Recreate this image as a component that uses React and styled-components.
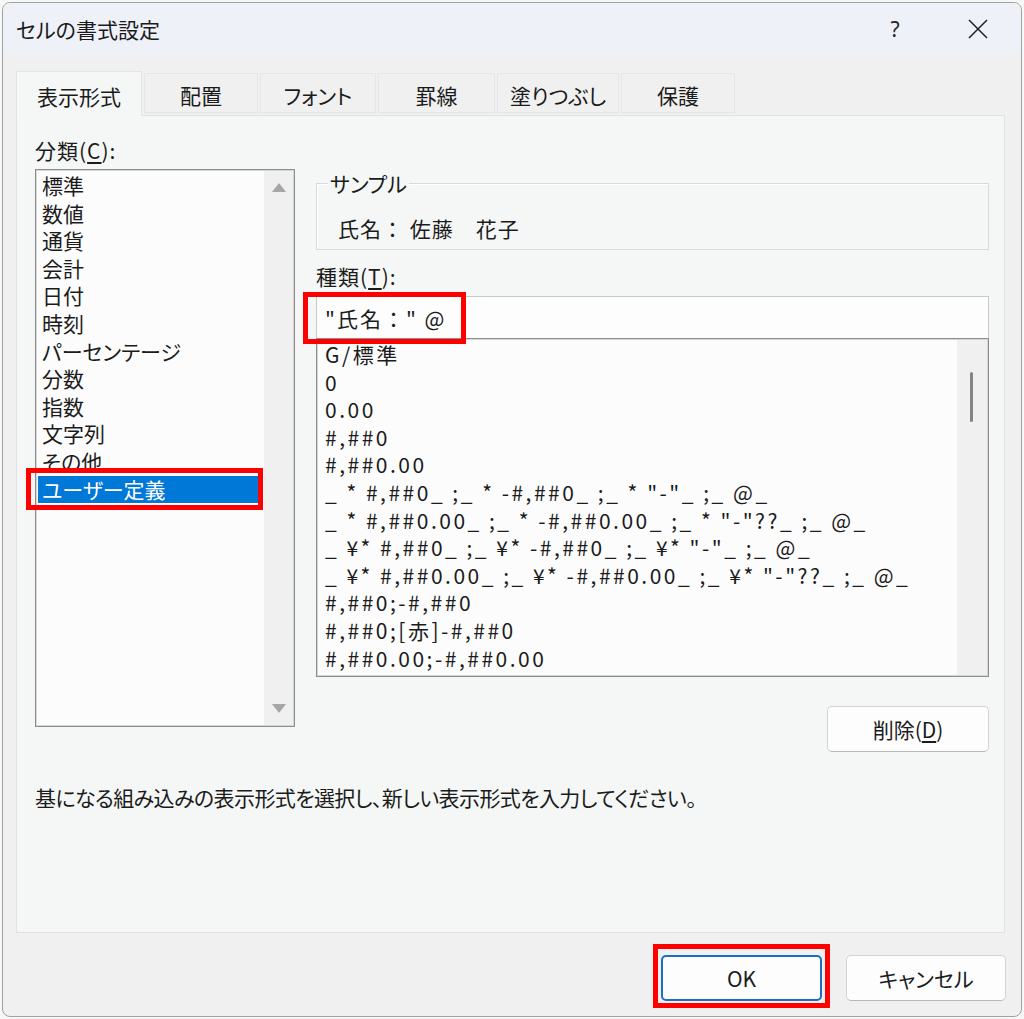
import React from 'react';
import styled, { createGlobalStyle } from 'styled-components';

const GlobalStyle = createGlobalStyle`
  html, body { margin: 0; padding: 0; }
  body {
    background: #f7f7f7;
    font-family: "Noto Sans CJK JP", "Noto Sans", sans-serif;
    font-size: 21px;
    color: #1b1b1b;
    font-feature-settings: "palt" 1;
  }
  *, *::before, *::after { box-sizing: border-box; }
`;

const Window = styled.div`
  margin: 2px 0 0 2px;
  width: 1020px;
  height: 1015px;
  border: 1px solid #a2a2a2;
  border-radius: 8px;
  background: #f0f0f0;
  overflow: hidden;
  display: flex;
  flex-direction: column;
`;

const TitleBar = styled.div`
  height: 51px;
  flex: none;
  background: #eef2f8;
  display: flex;
  align-items: center;
  padding: 0 13px;
`;

const Title = styled.div`
  line-height: 26px;
  font-size: 21px;
`;

const HelpButton = styled.div`
  margin-left: auto;
  width: 46px;
  text-align: center;
  font-family: "Noto Sans", sans-serif;
  font-size: 21px;
  color: #262626;
`;

const CloseButton = styled.div`
  width: 60px;
  margin-left: 30px;
  display: flex;
  justify-content: center;
  align-items: center;
`;

const Body = styled.div`
  flex: 1;
  display: flex;
  flex-direction: column;
  padding: 17px 16px 0 13px;
`;

const TabBar = styled.div`
  display: flex;
  align-items: flex-end;
  gap: 2px;
`;

const Tab = styled.div`
  width: ${p => p.$w}px;
  height: ${p => (p.$active ? 45 : 40)}px;
  margin-bottom: ${p => (p.$active ? -1 : 2)}px;
  background: ${p => (p.$active ? '#f4f7f5' : '#f0f0f0')};
  border: 1px solid ${p => (p.$active ? '#e4e4e4' : '#e6e6e6')};
  border-bottom: ${p => (p.$active ? 'none' : '1px solid #e6e6e6')};
  display: flex;
  align-items: center;
  justify-content: center;
  padding-top: 3px;
  position: relative;
  z-index: ${p => (p.$active ? 1 : 0)};
  font-size: 21px;
`;

const Panel = styled.div`
  flex: 1;
  background: #f4f7f5;
  border: 1px solid #e2e2e2;
  padding: 21px 15px 0 18px;
  display: flex;
  flex-direction: column;
`;

const Columns = styled.div`
  display: grid;
  grid-template-columns: 260px 1fr;
  column-gap: 21px;
  align-items: start;
`;

const Column = styled.div`
  display: flex;
  flex-direction: column;
`;

const FieldLabel = styled.div`
  margin-top: ${p => p.$mt || 0}px;
  line-height: 26px;
  letter-spacing: 1px;
`;

const Key = styled.span`
  text-decoration: underline;
  text-underline-offset: 3px;
`;

const ListBox = styled.div`
  margin-top: ${p => p.$mt || 0}px;
  height: ${p => p.$h}px;
  background: #fcfcfc;
  border: 1px solid #8d8d8d;
  box-shadow: inset 0 0 0 1px #d6d6d6;
  display: flex;
`;

const CategoryItems = styled.div`
  flex: 1;
  padding: 2px 6px 0 2px;
`;

const CategoryItem = styled.div`
  position: relative;
  height: 27.6px;
  line-height: 27.6px;
  padding-left: 4px;
  white-space: nowrap;
  background: ${p => (p.$selected ? '#0078d7' : 'transparent')};
  color: ${p => (p.$selected ? '#ffffff' : '#1b1b1b')};
`;

const ArrowBar = styled.div`
  width: 29px;
  margin: 1px 1px 1px 0;
  background: #f0f0f0;
  display: flex;
  flex-direction: column;
  justify-content: space-between;
  align-items: center;
  padding: 12px 0 12px 0;
`;

const ThumbBar = styled.div`
  width: 30px;
  margin: 1px 1px 1px 0;
  background: #f0f0f0;
  display: flex;
  flex-direction: column;
  align-items: center;
  padding-top: 32px;
`;

const Thumb = styled.div`
  width: 3px;
  height: 50px;
  border-radius: 2px;
  background: #848484;
  margin-left: -2px;
`;

const GroupBox = styled.div`
  position: relative;
  margin-top: 46px;
  height: 67px;
  border: 1px solid #dadada;
  box-shadow: inset 1px 1px 0 #ffffff;
  padding: 31px 0 0 21px;
`;

const Legend = styled.div`
  position: absolute;
  top: -13px;
  left: 11px;
  padding: 0 2px;
  background: #f4f7f5;
  line-height: 24px;
`;

const SampleText = styled.div`
  line-height: 26px;
  font-feature-settings: normal;
  letter-spacing: 1px;
  white-space: pre;
`;

const InputRow = styled.div`
  position: relative;
  margin-top: 7px;
  height: 42px;
  background: #fdfdfd;
  border: 1px solid #c9c9c9;
  border-bottom: none;
  display: flex;
  align-items: center;
  padding: 1px 0 0 8px;
  white-space: pre;
  font-feature-settings: normal;
  letter-spacing: 2px;
`;

const FormatItems = styled.div`
  flex: 1;
  overflow: hidden;
  padding: 2px 0 0 8px;
`;

const FormatItem = styled.div`
  height: 27.6px;
  line-height: 27.6px;
  white-space: pre;
  letter-spacing: 2.5px;
`;

const Button = styled.div`
  position: relative;
  width: ${p => p.$w}px;
  height: 46px;
  border-radius: 5px;
  background: #fdfdfd;
  border: ${p => (p.$primary ? '2px solid #1a6fc4' : '1px solid #d3d3d3')};
  border-bottom-color: ${p => (p.$primary ? '#1a6fc4' : '#b9b9b9')};
  display: flex;
  align-items: center;
  justify-content: center;
  font-size: 21px;
`;

const DeleteRow = styled.div`
  margin-top: 29px;
  display: flex;
  justify-content: flex-end;
`;

const Description = styled.div`
  margin-top: 32px;
  line-height: 26px;
  white-space: nowrap;
  letter-spacing: -0.6px;
`;

const Footer = styled.div`
  flex: none;
  display: flex;
  justify-content: flex-end;
  gap: 24px;
  padding: 22px 15px 15px 0;
`;

const Highlight = styled.span`
  position: absolute;
  top: ${p => p.$top}px;
  left: ${p => p.$left}px;
  width: ${p => p.$w}px;
  height: ${p => p.$h}px;
  border: 5px solid #ff0000;
  pointer-events: none;
  z-index: 2;
`;

const Triangle = ({ down }) => (
  <svg width="14" height="9" viewBox="0 0 14 9">
    <polygon points={down ? '0,0 14,0 7,9' : '0,9 14,9 7,0'} fill="#a6a6a6" />
  </svg>
);

const CloseIcon = () => (
  <svg width="20" height="20" viewBox="0 0 20 20">
    <path d="M1 1 L19 19 M19 1 L1 19" stroke="#1f1f1f" strokeWidth="1.5" fill="none" />
  </svg>
);

const tabs = [
  { label: '表示形式', w: 126, active: true },
  { label: '配置', w: 114 },
  { label: 'フォント', w: 116 },
  { label: '罫線', w: 117 },
  { label: '塗りつぶし', w: 122 },
  { label: '保護', w: 114 },
];

const categories = [
  '標準', '数値', '通貨', '会計', '日付', '時刻', 'パーセンテージ',
  '分数', '指数', '文字列', 'その他', 'ユーザー定義',
];

const formats = [
  'G/標準',
  '0',
  '0.00',
  '#,##0',
  '#,##0.00',
  '_ * #,##0_ ;_ * -#,##0_ ;_ * "-"_ ;_ @_',
  '_ * #,##0.00_ ;_ * -#,##0.00_ ;_ * "-"??_ ;_ @_',
  '_ ¥* #,##0_ ;_ ¥* -#,##0_ ;_ ¥* "-"_ ;_ @_',
  '_ ¥* #,##0.00_ ;_ ¥* -#,##0.00_ ;_ ¥* "-"??_ ;_ @_',
  '#,##0;-#,##0',
  '#,##0;[赤]-#,##0',
  '#,##0.00;-#,##0.00',
];

export default function App() {
  return (
    <>
      <GlobalStyle />
      <Window>
        <TitleBar>
          <Title>セルの書式設定</Title>
          <HelpButton>?</HelpButton>
          <CloseButton><CloseIcon /></CloseButton>
        </TitleBar>
        <Body>
          <TabBar>
            {tabs.map(t => (
              <Tab key={t.label} $w={t.w} $active={t.active}>{t.label}</Tab>
            ))}
          </TabBar>
          <Panel>
            <Columns>
              <Column>
                <FieldLabel>分類(<Key>C</Key>):</FieldLabel>
                <ListBox $mt={6} $h={558}>
                  <CategoryItems>
                    {categories.map(c => {
                      const sel = c === 'ユーザー定義';
                      return (
                        <CategoryItem key={c} $selected={sel}>
                          {c}
                          {sel && <Highlight $top={-8} $left={-12} $w={237} $h={42} />}
                        </CategoryItem>
                      );
                    })}
                  </CategoryItems>
                  <ArrowBar>
                    <Triangle />
                    <Triangle down />
                  </ArrowBar>
                </ListBox>
              </Column>
              <Column>
                <GroupBox>
                  <Legend>サンプル</Legend>
                  <SampleText>氏名： 佐藤　花子</SampleText>
                </GroupBox>
                <FieldLabel $mt={13}>種類(<Key>T</Key>):</FieldLabel>
                <InputRow>
                  {'"氏名：" @'}
                  <Highlight $top={-5} $left={-14} $w={163} $h={52} />
                </InputRow>
                <ListBox $h={339}>
                  <FormatItems>
                    {formats.map(f => (
                      <FormatItem key={f}>{f}</FormatItem>
                    ))}
                  </FormatItems>
                  <ThumbBar>
                    <Thumb />
                  </ThumbBar>
                </ListBox>
                <DeleteRow>
                  <Button $w={162}>削除(<Key>D</Key>)</Button>
                </DeleteRow>
              </Column>
            </Columns>
            <Description>基になる組み込みの表示形式を選択し、新しい表示形式を入力してください。</Description>
          </Panel>
        </Body>
        <Footer>
          <Button $w={161} $primary>
            OK
            <Highlight $top={-13} $left={-10} $w={177} $h={64} />
          </Button>
          <Button $w={160}>キャンセル</Button>
        </Footer>
      </Window>
    </>
  );
}
